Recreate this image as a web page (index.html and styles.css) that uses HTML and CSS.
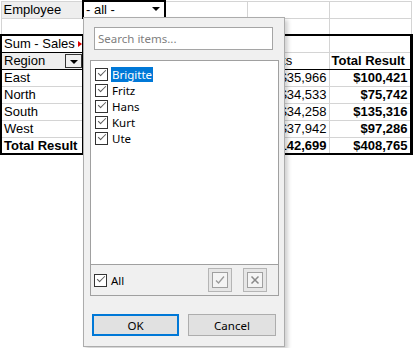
FILE: index.html
```html
<html>
  <head>
    <title>Pivot filter</title>
    <link rel="stylesheet" href="styles.css">
  </head>
  <body>
    <table class="sheet">
      <colgroup><col><col><col><col><col></colgroup>
      <tr>
        <td class="field">Employee</td>
        <td class="filter">- all -<span class="dd"></span></td>
        <td></td><td></td><td></td>
      </tr>
      <tr><td></td><td></td><td></td><td></td><td></td></tr>
      <tr class="pv-first">
        <td class="pv-left pv-corner clipped">Sum - Sales</td>
        <td></td><td></td><td></td><td class="pv-right"></td>
      </tr>
      <tr class="pv-head">
        <td class="field pv-left pv-corner">Region<span class="dd boxed"></span></td>
        <td></td><td></td><td>Snacks</td><td class="pv-total pv-right bold">Total Result</td>
      </tr>
      <tr>
        <td class="pv-left pv-corner">East</td>
        <td></td><td></td><td class="num">$35,966</td><td class="num bold pv-total pv-right">$100,421</td>
      </tr>
      <tr>
        <td class="pv-left pv-corner">North</td>
        <td></td><td></td><td class="num">$34,533</td><td class="num bold pv-total pv-right">$75,742</td>
      </tr>
      <tr>
        <td class="pv-left pv-corner">South</td>
        <td></td><td></td><td class="num">$34,258</td><td class="num bold pv-total pv-right">$135,316</td>
      </tr>
      <tr>
        <td class="pv-left pv-corner">West</td>
        <td></td><td></td><td class="num">$37,942</td><td class="num bold pv-total pv-right">$97,286</td>
      </tr>
      <tr class="pv-sum">
        <td class="pv-left pv-corner bold">Total Result</td>
        <td></td><td></td><td class="num bold">$142,699</td><td class="num bold pv-total pv-right">$408,765</td>
      </tr>
    </table>

    <div class="popup">
      <div class="search">Search items...</div>
      <div class="listbox">
        <ul class="items">
          <li><span class="cb on"></span><span class="label selected">Brigitte</span></li>
          <li><span class="cb on"></span><span class="label">Fritz</span></li>
          <li><span class="cb on"></span><span class="label">Hans</span></li>
          <li><span class="cb on"></span><span class="label">Kurt</span></li>
          <li><span class="cb on"></span><span class="label">Ute</span></li>
        </ul>
        <div class="listfoot">
          <span class="cb on"></span><span class="label">All</span>
          <span class="iconbtn first">
            <span class="glyph">
              <svg width="14" height="14" viewBox="0 0 14 14"><polyline points="3,7.5 5.5,10 11,3.5" fill="none" stroke="#9a9a9a" stroke-width="1.3"/></svg>
            </span>
          </span>
          <span class="iconbtn">
            <span class="glyph">
              <svg width="14" height="14" viewBox="0 0 14 14"><path d="M3.5 3.5 L10.5 10.5 M10.5 3.5 L3.5 10.5" stroke="#8a8a8a" stroke-width="1.5"/></svg>
            </span>
          </span>
        </div>
      </div>
      <div class="actions">
        <button class="btn ok">OK</button>
        <button class="btn">Cancel</button>
      </div>
    </div>
  </body>
</html>
```

FILE: styles.css
```css
body {
  margin: 0;
  background: #fff;
  position: relative;
  font-family: "Liberation Sans", Arial, sans-serif;
}

/* Sheet */
.sheet {
  border-collapse: collapse;
  table-layout: fixed;
  width: 412px;
  font-size: 13px;
  color: #000;
}
.sheet col {
  width: 82px;
}
.sheet tr {
  height: 17px;
}
.sheet td {
  position: relative;
  padding: 0 2px;
  border: 1px solid #d4d4d4;
  line-height: 15px;
  white-space: nowrap;
  overflow: hidden;
}
.sheet .field {
  background: #eeeeee;
}
.sheet .filter {
  border: 2px solid #000;
}
.sheet .num {
  text-align: right;
}
.sheet .bold {
  font-weight: bold;
}
.sheet .pv-first td {
  border-top: 2px solid #000;
}
.sheet .pv-head td {
  border-bottom: 1px solid #000;
}
.sheet .pv-sum td {
  border-top: 1px solid #000;
  border-bottom: 2px solid #000;
}
.sheet .pv-left {
  border-left: 2px solid #000;
}
.sheet .pv-corner {
  border-right: 2px solid #000;
}
.sheet .pv-total {
  border-left: 1px solid #000;
}
.sheet .pv-right {
  border-right: 3px solid #000;
}
.sheet .pv-first .pv-corner {
  border-bottom: 1px solid #000;
}
.sheet .clipped::after {
  content: "";
  position: absolute;
  right: 0;
  top: 5px;
  border-left: 4px solid #e00000;
  border-top: 3px solid transparent;
  border-bottom: 3px solid transparent;
}
.dd {
  position: absolute;
  right: 0;
  top: 0;
  bottom: 0;
  width: 16px;
  background: #f0f0f0;
  border-left: 1px solid #555;
}
.dd.boxed {
  top: 1px;
  bottom: 1px;
  border: 1px solid #333;
  width: 15px;
}
.dd::after {
  content: "";
  position: absolute;
  left: 4px;
  top: 5px;
  border-top: 4px solid #000;
  border-left: 4px solid transparent;
  border-right: 4px solid transparent;
}
.filter .dd {
  background: #fff;
  border-left: 0;
}

/* Filter popup */
.popup {
  position: absolute;
  left: 83px;
  top: 17px;
  width: 200px;
  height: 328px;
  border: 1px solid #acacac;
  background: #f0f0f0;
  box-shadow: 3px 3px 4px rgba(0, 0, 0, 0.18);
  font-family: "Noto Sans", "Segoe UI", sans-serif;
  font-size: 11.5px;
  color: #000;
  display: flex;
  flex-direction: column;
}
.search {
  margin: 9px 0 0 10px;
  width: 174px;
  height: 21px;
  padding-left: 3px;
  border: 1px solid #a5a5a5;
  background: #fff;
  color: #808080;
  line-height: 21px;
}
.listbox {
  margin: 10px 0 0 6px;
  width: 187px;
  height: 234px;
  border: 1px solid #a0a0a0;
  background: #fff;
  display: flex;
  flex-direction: column;
}
.items {
  list-style: none;
  margin: 0;
  padding: 5px 0 0 4px;
  flex: 1;
}
.items li {
  height: 16px;
  display: flex;
  align-items: center;
}
.cb {
  position: relative;
  width: 11px;
  height: 11px;
  border: 1px solid #333;
  background: #fff;
  margin-right: 3px;
  flex: none;
}
.cb.on::after {
  content: "";
  position: absolute;
  left: 2px;
  top: 1px;
  width: 7px;
  height: 3px;
  border-left: 1.5px solid #5a5a5a;
  border-bottom: 1.5px solid #5a5a5a;
  transform: rotate(-45deg);
}
.label {
  padding: 0 1px;
  line-height: 15px;
}
.label.selected {
  background: #0078d7;
  color: #fff;
}
.listfoot {
  height: 30px;
  border-top: 1px solid #a0a0a0;
  background: #f0f0f0;
  display: flex;
  align-items: center;
  padding-left: 3px;
}
.iconbtn {
  width: 22px;
  height: 22px;
  border: 1px solid #b5b5b5;
  background: #e6e6e6;
  display: flex;
  align-items: center;
  justify-content: center;
  margin-right: 11px;
}
.iconbtn.first {
  margin-left: auto;
}
.glyph {
  width: 14px;
  height: 14px;
  border: 1px solid #a0a0a0;
  background: #f4f4f4;
  display: flex;
}
.actions {
  margin: 18px 0 0 8px;
  display: flex;
  gap: 9px;
}
.btn {
  height: 22px;
  width: 88px;
  border: 1px solid #adadad;
  background: #e1e1e1;
  font-family: "Noto Sans", "Segoe UI", sans-serif;
  font-size: 11.5px;
  color: #000;
  padding: 0;
}
.btn.ok {
  width: 87px;
  border: 2px solid #0078d7;
}
```
